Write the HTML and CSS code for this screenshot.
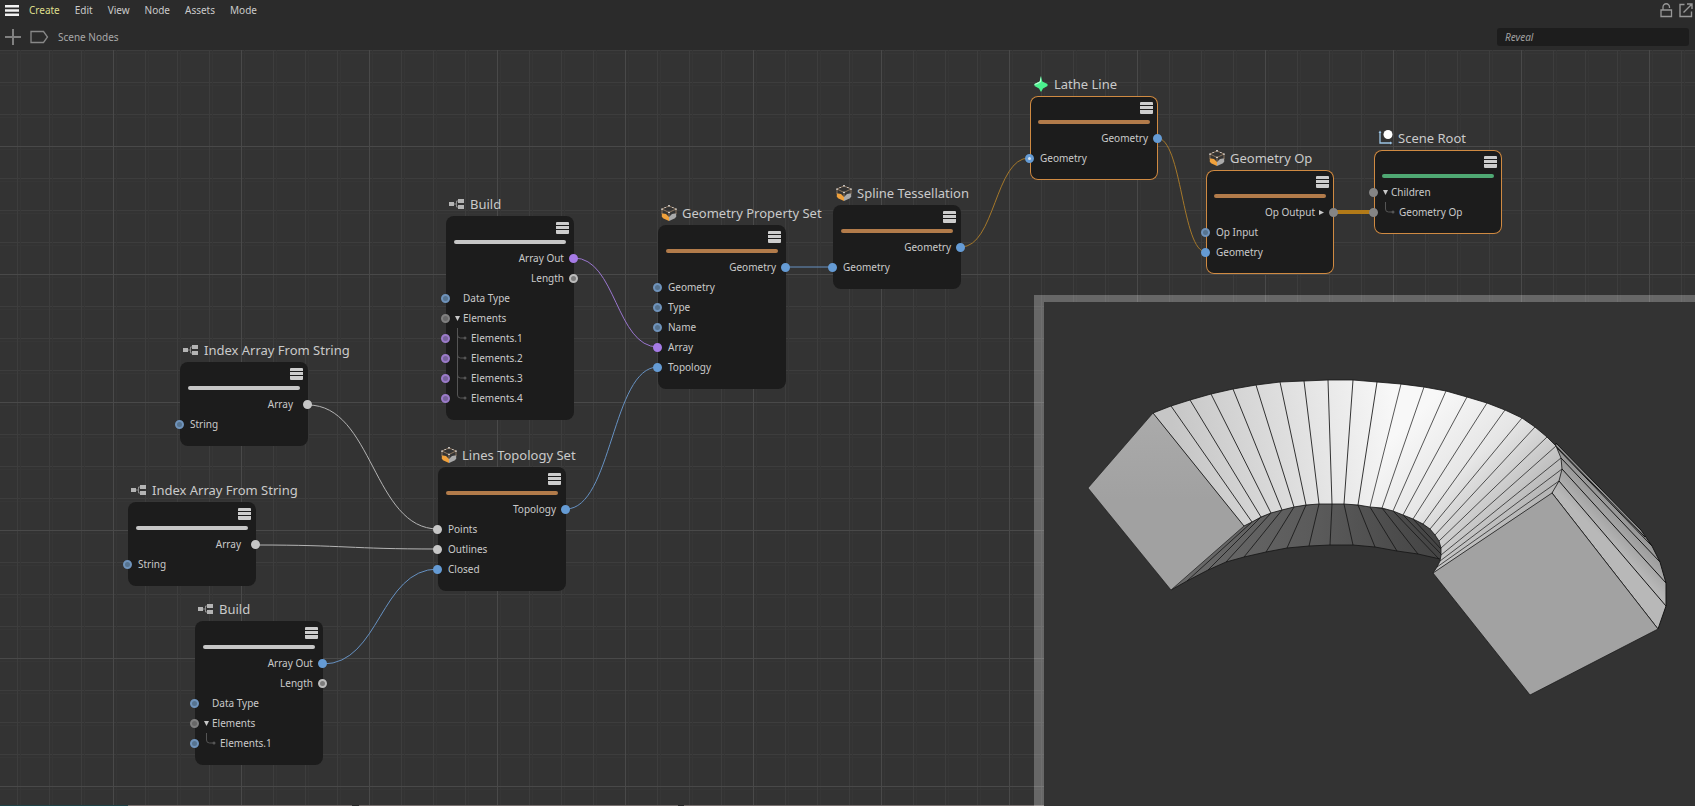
FILE: index.html
```html
<!DOCTYPE html>
<html lang="en">
<head>
  <meta charset="UTF-8">
  <meta name="viewport" content="width=device-width, initial-scale=1.0">
  <title>Scene Nodes</title>
  <link rel="stylesheet" href="styles.css">
</head>
<body>
  <!-- shared icons -->
  <svg class="defs" aria-hidden="true">
    <symbol id="i-build" viewBox="0 0 16 16">
      <path d="M0 6h5v4H0zM9 3h6v4H9zM9 9h6v4H9z" fill="#b4b4b4"/>
      <path d="M5 8h2.500M9 5H7.500v6H9" fill="none" stroke="#8c8c8c"/>
    </symbol>
    <symbol id="i-cube" viewBox="0 0 16 16">
      <path d="M.8 8.200L5 9l3 3v4l-6-2.800-1.200-1.700z" fill="#f0a13c"/>
      <path d="M8 12l3-3 4.200-.8v3.300L14 13.200 8 16z" fill="#a9a9a9"/>
      <path d="M8 1l7 3-7 3.500L1 4zM1 4v5M15 4v5M8 7.500V12" fill="none" stroke="#a08468" stroke-width=".8"/>
      <path d="M7.300 0h1.400v1.400H7.300zM.3 3.400h1.400v1.400H.3zM14.300 3.400h1.400v1.400h-1.400zM7.300 6.700h1.400v1.400H7.300zM3.600 2h1v1h-1zM11.400 2h1v1h-1z" fill="#eee"/>
    </symbol>
    <symbol id="i-lathe" viewBox="0 0 16 16">
      <path d="M8 0l1.300 5.500L14.500 8v2L10 12.500 8 16l-2-3.500L1.500 10V8l5.200-2.500z" fill="#4bf08e"/>
      <path d="M8 0v6L4.500 8l-3 1V8l5.200-2.500z" fill="#b5ffd2"/>
    </symbol>
    <symbol id="i-root" viewBox="0 0 16 16">
      <path d="M3 2v11h11" fill="none" stroke="#9cc4e4" stroke-width="1.300"/>
      <path d="M1.500 3L3 .5 4.500 3zM13 11.500l2.500 1.500-2.500 1.500z" fill="#9cc4e4"/>
      <circle cx="11" cy="4.500" r="4.500" fill="#fff"/>
    </symbol>
    <symbol id="i-menu" viewBox="0 0 13 12">
      <path d="M1 0h11q1 0 1 1v2H0V1q0-1 1-1zM0 4h13v3H0zM0 8h13v3q0 1-1 1H1q-1 0-1-1z" fill="#cdcdcd"/>
    </symbol>
    <symbol id="i-down" viewBox="0 0 5 5"><path d="M0 0h5L2.500 5z" fill="#c8c8c8"/></symbol>
    <symbol id="i-right" viewBox="0 0 5 5"><path d="M0 0v5l5-2.500z" fill="#c8c8c8"/></symbol>
    <symbol id="i-branch" viewBox="0 0 11 20">
      <path d="M1.500 0v20M1.500 7q0 3 3 3h4" fill="none" stroke="#555"/><circle cx="9" cy="10" r="1.500" fill="#555"/>
    </symbol>
    <symbol id="i-branch-end" viewBox="0 0 11 20">
      <path d="M1.500 0v7q0 3 3 3h4" fill="none" stroke="#555"/><circle cx="9" cy="10" r="1.500" fill="#555"/>
    </symbol>
  </svg>

  <header class="topbar">
    <nav class="menubar">
      <button class="icon-btn" aria-label="Menu">
        <svg width="14" height="11" viewBox="0 0 14 11"><path d="M0 0h14v2.500H0zM0 4.200h14v2.500H0zM0 8.500h14V11H0z" fill="#f2f2f2"/></svg>
      </button>
      <div class="menu-items">
        <button class="active">Create</button>
        <button>Edit</button>
        <button>View</button>
        <button>Node</button>
        <button>Assets</button>
        <button>Mode</button>
      </div>
      <div class="window-tools">
        <button class="icon-btn" aria-label="Lock">
          <svg width="14" height="16" viewBox="0 0 14 16"><path d="M2 8h10.500v6.500H2zM4 7.500V5a3.200 3.200 0 0 1 6.500 0v1" fill="none" stroke="#979797" stroke-width="1.300"/></svg>
        </button>
        <button class="icon-btn" aria-label="Open in window">
          <svg width="14" height="16" viewBox="0 0 14 16"><path d="M5.500 2.500H1v12h11.500V9.500M8 2h5v5M13 2L4.500 10.500" fill="none" stroke="#979797" stroke-width="1.400"/></svg>
        </button>
      </div>
    </nav>
    <div class="pathbar">
      <button class="icon-btn" aria-label="Add">
        <svg width="16" height="16" viewBox="0 0 16 16"><path d="M7 0h2v16H7zM0 7h16v2H0z" fill="#808080"/></svg>
      </button>
      <svg width="19" height="14" viewBox="0 0 19 14"><path d="M1 1.500h12.500L17.500 7l-4 5.500H1z" fill="none" stroke="#888" stroke-width="1.300"/></svg>
      <span class="crumb">Scene Nodes</span>
      <input class="reveal" type="text" placeholder="Reveal" aria-label="Reveal">
    </div>
  </header>

  <main class="canvas">
    <!-- connections -->
    <svg class="wires" aria-hidden="true">
      <path class="violet" d="M574 208C616 208 616 297 658 297"/>
      <path class="light" d="M308 355C373 355 373 479 438 479"/>
      <path class="light" d="M256 495C347 495 347 499 438 499"/>
      <path class="blue" d="M323 614C380 614 380 519 438 519"/>
      <path class="blue" d="M566 459C612 459 612 317 658 317"/>
      <path class="blue" d="M786 217H833"/>
      <path class="orange" d="M961 197C995 197 995 108 1029 108"/>
      <path class="orange" d="M1157 88C1182 88 1182 202 1206 202"/>
      <path class="orange thick" d="M1334 162H1374"/>
    </svg>

    <section class="node build-a">
      <h2><svg><use href="#i-build"/></svg>Build</h2>
      <div class="body">
        <button class="node-menu" aria-label="Node menu"><svg width="13" height="12"><use href="#i-menu"/></svg></button>
        <div class="bar"></div>
        <ul>
          <li class="out">Array Out<i class="port violet on"></i></li>
          <li class="out">Length<i class="port light"></i></li>
          <li class="indent"><i class="port blue"></i>Data Type</li>
          <li class="group"><i class="port grey"></i><svg class="caret"><use href="#i-down"/></svg>Elements</li>
          <li class="child"><i class="port violet"></i><svg class="branch"><use href="#i-branch"/></svg>Elements.1</li>
          <li class="child"><i class="port violet"></i><svg class="branch"><use href="#i-branch"/></svg>Elements.2</li>
          <li class="child"><i class="port violet"></i><svg class="branch"><use href="#i-branch"/></svg>Elements.3</li>
          <li class="child"><i class="port violet"></i><svg class="branch"><use href="#i-branch-end"/></svg>Elements.4</li>
        </ul>
      </div>
    </section>

    <section class="node index-a">
      <h2><svg><use href="#i-build"/></svg>Index Array From String</h2>
      <div class="body">
        <button class="node-menu" aria-label="Node menu"><svg width="13" height="12"><use href="#i-menu"/></svg></button>
        <div class="bar"></div>
        <ul>
          <li class="out wide">Array<i class="port light on"></i></li>
          <li><i class="port blue"></i>String</li>
        </ul>
      </div>
    </section>

    <section class="node index-b">
      <h2><svg><use href="#i-build"/></svg>Index Array From String</h2>
      <div class="body">
        <button class="node-menu" aria-label="Node menu"><svg width="13" height="12"><use href="#i-menu"/></svg></button>
        <div class="bar"></div>
        <ul>
          <li class="out wide">Array<i class="port light on"></i></li>
          <li><i class="port blue"></i>String</li>
        </ul>
      </div>
    </section>

    <section class="node build-b">
      <h2><svg><use href="#i-build"/></svg>Build</h2>
      <div class="body">
        <button class="node-menu" aria-label="Node menu"><svg width="13" height="12"><use href="#i-menu"/></svg></button>
        <div class="bar"></div>
        <ul>
          <li class="out">Array Out<i class="port blue on"></i></li>
          <li class="out">Length<i class="port light"></i></li>
          <li class="indent"><i class="port blue"></i>Data Type</li>
          <li class="group"><i class="port grey"></i><svg class="caret"><use href="#i-down"/></svg>Elements</li>
          <li class="child"><i class="port blue"></i><svg class="branch"><use href="#i-branch-end"/></svg>Elements.1</li>
        </ul>
      </div>
    </section>

    <section class="node lines">
      <h2><svg><use href="#i-cube"/></svg>Lines Topology Set</h2>
      <div class="body">
        <button class="node-menu" aria-label="Node menu"><svg width="13" height="12"><use href="#i-menu"/></svg></button>
        <div class="bar brown"></div>
        <ul>
          <li class="out">Topology<i class="port blue on"></i></li>
          <li><i class="port light on"></i>Points</li>
          <li><i class="port light on"></i>Outlines</li>
          <li><i class="port blue on"></i>Closed</li>
        </ul>
      </div>
    </section>

    <section class="node property">
      <h2><svg><use href="#i-cube"/></svg>Geometry Property Set</h2>
      <div class="body">
        <button class="node-menu" aria-label="Node menu"><svg width="13" height="12"><use href="#i-menu"/></svg></button>
        <div class="bar brown"></div>
        <ul>
          <li class="out">Geometry<i class="port blue on"></i></li>
          <li><i class="port blue"></i>Geometry</li>
          <li><i class="port blue"></i>Type</li>
          <li><i class="port blue"></i>Name</li>
          <li><i class="port violet on"></i>Array</li>
          <li><i class="port blue on"></i>Topology</li>
        </ul>
      </div>
    </section>

    <section class="node spline">
      <h2><svg><use href="#i-cube"/></svg>Spline Tessellation</h2>
      <div class="body">
        <button class="node-menu" aria-label="Node menu"><svg width="13" height="12"><use href="#i-menu"/></svg></button>
        <div class="bar brown"></div>
        <ul>
          <li class="out">Geometry<i class="port blue on"></i></li>
          <li><i class="port blue on"></i>Geometry</li>
        </ul>
      </div>
    </section>

    <section class="node selected lathe">
      <h2><svg><use href="#i-lathe"/></svg>Lathe Line</h2>
      <div class="body">
        <button class="node-menu" aria-label="Node menu"><svg width="13" height="12"><use href="#i-menu"/></svg></button>
        <div class="bar brown"></div>
        <ul>
          <li class="out">Geometry<i class="port blue on"></i></li>
          <li><i class="port blue dot"></i>Geometry</li>
        </ul>
      </div>
    </section>

    <section class="node selected geo-op">
      <h2><svg><use href="#i-cube"/></svg>Geometry Op</h2>
      <div class="body">
        <button class="node-menu" aria-label="Node menu"><svg width="13" height="12"><use href="#i-menu"/></svg></button>
        <div class="bar brown"></div>
        <ul>
          <li class="out">Op Output<svg class="caret"><use href="#i-right"/></svg><i class="port grey on"></i></li>
          <li><i class="port blue"></i>Op Input</li>
          <li><i class="port blue on"></i>Geometry</li>
        </ul>
      </div>
    </section>

    <section class="node selected root">
      <h2><svg><use href="#i-root"/></svg>Scene Root</h2>
      <div class="body">
        <button class="node-menu" aria-label="Node menu"><svg width="13" height="12"><use href="#i-menu"/></svg></button>
        <div class="bar green"></div>
        <ul>
          <li class="group"><i class="port grey on"></i><svg class="caret"><use href="#i-down"/></svg>Children</li>
          <li class="child"><i class="port grey on"></i><svg class="branch"><use href="#i-branch-end"/></svg>Geometry Op</li>
        </ul>
      </div>
    </section>

    <div class="strip"></div>

    <!-- viewport with the lathed mesh -->
    <aside class="preview">
      <svg viewBox="1044 302 651 504" role="img" aria-label="Mesh preview">
        <defs>
          <linearGradient id="g-left" gradientUnits="userSpaceOnUse" x1="1180" y1="470" x2="1400" y2="430">
            <stop offset="0" stop-color="#c6c6c6"/><stop offset=".5" stop-color="#dedede"/><stop offset="1" stop-color="#f8f8f8"/>
          </linearGradient>
          <linearGradient id="g-right" gradientUnits="userSpaceOnUse" x1="1400" y1="430" x2="1500" y2="535">
            <stop offset="0" stop-color="#f8f8f8"/><stop offset=".5" stop-color="#e6e6e6"/><stop offset="1" stop-color="#b6b6b6"/>
          </linearGradient>
          <linearGradient id="g-inner" gradientUnits="userSpaceOnUse" x1="1200" y1="0" x2="1440" y2="0">
            <stop offset="0" stop-color="#686868"/><stop offset=".5" stop-color="#5a5a5a"/><stop offset="1" stop-color="#444"/>
          </linearGradient>
          <linearGradient id="g-side" gradientUnits="userSpaceOnUse" x1="1625" y1="510" x2="1600" y2="535">
            <stop offset="0" stop-color="#8f8f8f"/><stop offset="1" stop-color="#b8b8b8"/>
          </linearGradient>
          <linearGradient id="g-cap" gradientUnits="userSpaceOnUse" x1="1160" y1="420" x2="1160" y2="500">
            <stop offset="0" stop-color="#aaa"/><stop offset="1" stop-color="#a1a1a1"/>
          </linearGradient>
        </defs>
        <g stroke="#141414" stroke-width="1" stroke-linejoin="round">
          <path stroke="none" fill="url(#g-inner)" d="M1171 590L1187 581 1208 570 1226 562 1244 557 1266 552 1287 548 1309 546 1330 545 1353 545 1375 547 1397 551 1418 554 1440 559 1442 550 1439 541 1430 529 1413 519 1393 511 1370 507 1344 504 1319 504 1294 507 1271 513 1244 526z"/>
          <path fill="none" stroke-opacity=".8" d="M1171 590L1187 581 1208 570 1226 562 1244 557 1266 552 1287 548 1309 546 1330 545 1353 545 1375 547 1397 551 1418 554 1440 559M1252 522L1187 581M1261 517L1208 570M1271 513L1226 562M1282 510L1244 557M1294 507L1266 552M1306 505L1287 548M1319 504L1309 546M1332 504L1330 545M1344 504L1353 545M1358 505L1375 547M1370 507L1397 551M1382 508L1418 554M1393 511L1439 559M1403 515L1441 554M1413 519L1441 549"/>
          <path stroke="none" fill="url(#g-cap)" d="M1153 413L1088 488 1171 590 1244 526z"/>
          <path fill="none" stroke-opacity=".6" d="M1153 413L1088 488 1171 590 1244 526"/>
          <path fill="url(#g-side)" d="M1556 443L1641 530 1652 546 1660 562 1666 583 1666 606 1658 629 1552 493z"/>
          <path fill="none" d="M1559 481L1666 606M1562 469L1666 583M1561 458L1660 562M1556 447L1652 546M1547 437L1645 537"/>
          <path stroke="none" fill="url(#g-left)" d="M1153 413L1171 406 1190 400 1211 394 1233 389 1256 385 1280 382 1304 381 1328 380 1353 380 1377 382 1401 384 1370 507 1358 505 1344 504 1332 504 1319 504 1306 505 1294 507 1282 510 1271 513 1261 517 1252 522 1244 526z"/>
          <path stroke="none" fill="url(#g-right)" d="M1400 384L1424 387 1446 391 1467 397 1487 403 1505 410 1522 418 1535 427 1547 437 1556 446 1561 458 1562 469 1559 481 1552 493 1433 573 1437 567 1440 561 1441 555 1441 548 1439 541 1435 535 1430 529 1423 524 1413 519 1403 515 1393 511 1382 508 1369 507z"/>
          <path fill="none" stroke-opacity=".8" d="M1153 413L1171 406 1190 400 1211 394 1233 389 1256 385 1280 382 1304 381 1328 380 1353 380 1377 382 1401 384 1424 387 1446 391 1467 397 1487 403 1505 410 1522 418 1535 427 1547 437 1556 446 1561 458 1562 469 1559 481 1552 493M1244 526L1252 522 1261 517 1271 513 1282 510 1294 507 1306 505 1319 504 1332 504 1344 504 1358 505 1370 507 1382 508 1393 511 1403 515 1413 519 1423 524 1430 529 1435 535 1439 541 1441 548 1441 555 1440 561 1437 567 1433 573"/>
          <path fill="none" stroke-opacity=".85" d="M1153 413L1244 526M1171 406L1252 522M1190 400L1261 517M1211 394L1271 513M1233 389L1282 510M1256 385L1294 507M1280 382L1306 505M1304 381L1319 504M1328 380L1332 504M1353 380L1344 504M1377 382L1358 505"/>
          <path fill="none" stroke-opacity=".7" d="M1401 384L1370 507M1424 387L1382 508M1446 391L1393 511M1467 397L1403 515M1487 403L1413 519M1505 410L1423 524M1522 418L1430 529M1535 427L1435 535M1547 437L1439 541M1556 446L1441 548M1561 458L1441 555M1562 469L1440 561M1559 481L1437 567"/>
          <path stroke="none" fill="#a2a2a2" d="M1552 493L1658 629 1530 695 1433 573z"/>
          <path fill="none" stroke-opacity=".7" d="M1433 573L1552 493 1658 629 1530 695z"/>
        </g>
      </svg>
    </aside>
  </main>
</body>
</html>
```

FILE: styles.css
```css
* {
  box-sizing: border-box;
}
body {
  margin: 0;
  height: 100vh;
  display: flex;
  flex-direction: column;
  overflow: hidden;
  background-color: #333;
  color: #cacaca;
  font-family: "Noto Sans", "Open Sans", sans-serif;
  font-size: 10px;
}
button {
  background: none;
  border: none;
  padding: 0;
  color: inherit;
  font: inherit;
  cursor: pointer;
}
svg {
  display: block;
  flex: none;
}
.defs {
  position: absolute;
  width: 0;
  height: 0;
}

/* top bars */
.topbar {
  height: 50px;
  background-color: #2b2b2b;
}
.menubar {
  display: flex;
  align-items: center;
  height: 20px;
  padding: 0 2px 0 5px;
}
.menu-items {
  display: flex;
  gap: 15px;
  margin-left: 10px;
}
.menu-items .active {
  color: #dede8c;
}
.window-tools {
  display: flex;
  gap: 6px;
  margin-left: auto;
}
.pathbar {
  display: flex;
  align-items: center;
  height: 34px;
  padding: 0 6px 0 5px;
}
.pathbar > svg {
  margin-left: 9px;
}
.crumb {
  margin-left: 9px;
  color: #a8a8a8;
}
.reveal {
  width: 192px;
  height: 18px;
  margin-left: auto;
  padding: 0 8px;
  border: none;
  border-radius: 3px;
  background-color: #1d1d1d;
  color: #a0a0a0;
  font: italic 10px "Noto Sans", "Open Sans", sans-serif;
}
.reveal::placeholder {
  color: #a0a0a0;
}

/* canvas */
.canvas {
  position: relative;
  flex: 1;
  overflow: hidden;
  background-color: #333;
  background-image:
    linear-gradient(90deg, #494949 1px, transparent 1px),
    linear-gradient(#494949 1px, transparent 1px),
    linear-gradient(90deg, #3d3d3d 1px, transparent 1px, transparent 3px, #363636 3px, #363636 4px, transparent 4px),
    linear-gradient(#3d3d3d 1px, transparent 1px, transparent 3px, #363636 3px, #363636 4px, transparent 4px);
  background-size: 128px 128px, 128px 128px, 32px 32px, 32px 32px;
  background-position: 113px 96px, 113px 96px, 17px 0, 17px 0;
}
.wires {
  position: absolute;
  inset: 0;
  width: 100%;
  height: 100%;
}
.wires path {
  fill: none;
  stroke-width: 1;
}
.wires .violet { stroke: #9a76cf; }
.wires .light { stroke: #b4b4b4; }
.wires .blue { stroke: #6691c2; }
.wires .orange { stroke: #a5782a; }
.wires .thick {
  stroke: #b27a18;
  stroke-width: 4;
}

/* nodes */
.node {
  position: absolute;
  width: 128px;
}
.build-a { left: 446px; top: 142px; }
.index-a { left: 180px; top: 288px; }
.index-b { left: 128px; top: 428px; }
.build-b { left: 195px; top: 547px; }
.lines { left: 438px; top: 393px; }
.property { left: 658px; top: 151px; }
.spline { left: 833px; top: 131px; }
.lathe { left: 1030px; top: 22px; }
.geo-op { left: 1206px; top: 96px; }
.root { left: 1374px; top: 76px; }

.node h2 {
  display: flex;
  align-items: center;
  gap: 5px;
  height: 24px;
  margin: 0;
  padding-left: 3px;
  font-size: 13px;
  font-weight: 400;
  white-space: nowrap;
}
.node h2 svg {
  width: 16px;
  height: 16px;
}
.body {
  padding: 6px 0 12px;
  border-radius: 8px;
  background-color: #1c1c1c;
}
.selected .body {
  box-shadow: inset 0 0 0 1px #cf8a42;
}
.node-menu {
  display: block;
  margin: 0 5px 6px auto;
}
.bar {
  height: 4px;
  margin: 0 8px 4px;
  border-radius: 2px;
  background-color: #c6c6c6;
}
.bar.brown { background-color: #b27b4a; }
.bar.green { background-color: #4fa873; }

.node ul {
  margin: 0;
  padding: 0;
  list-style: none;
}
.node li {
  display: flex;
  align-items: center;
  height: 20px;
}
.node .out {
  justify-content: flex-end;
}
.port {
  flex: none;
  width: 9px;
  height: 9px;
  margin: 0 6px 0 -5px;
  border: 2px solid;
  border-radius: 50%;
}
.out .port {
  margin: 0 -4px 0 5px;
}
.wide .port {
  margin-left: 10px;
}
.indent .port {
  margin-right: 13px;
}
.port.blue { border-color: #6f93bb; background-color: #56738f; }
.port.violet { border-color: #9b7bc9; background-color: #77629a; }
.port.light { border-color: #bcbcbc; background-color: #7c7c7c; }
.port.grey { border-color: #808080; background-color: #686868; }
.port.blue.on { border-color: #659bd4; background-color: #659bd4; }
.port.violet.on { border-color: #a67be6; background-color: #a67be6; }
.port.light.on { border-color: #c6c6c6; background-color: #c6c6c6; }
.port.grey.on { border-color: #858585; background-color: #858585; }
.port.blue.dot {
  border-width: 3px;
  border-color: #659bd4;
  background-color: #d8e6f4;
}

.caret {
  width: 5px;
  height: 5px;
  margin: 0 3px 0 -1px;
}
.out .caret {
  margin: 0 0 0 4px;
}
.branch {
  width: 11px;
  height: 20px;
  margin-right: 4px;
}

.strip {
  position: absolute;
  left: 0;
  right: 0;
  bottom: 0;
  height: 1px;
  background: linear-gradient(90deg, #1f4347 128px, #77706f 128px, #77706f 352px, #2c2c2c 352px, #2c2c2c 359px, #77706f 359px, #77706f 678px, #2c2c2c 678px, #2c2c2c 684px, #77706f 684px);
}

/* viewport over the node canvas */
.preview {
  position: absolute;
  left: 1034px;
  top: 245px;
  right: 0;
  bottom: 0;
  border: solid rgba(255, 255, 255, 0.26);
  border-width: 7px 0 0 10px;
  background-color: #333;
  background-clip: padding-box;
}
.preview svg {
  width: 100%;
  height: 100%;
}
```
